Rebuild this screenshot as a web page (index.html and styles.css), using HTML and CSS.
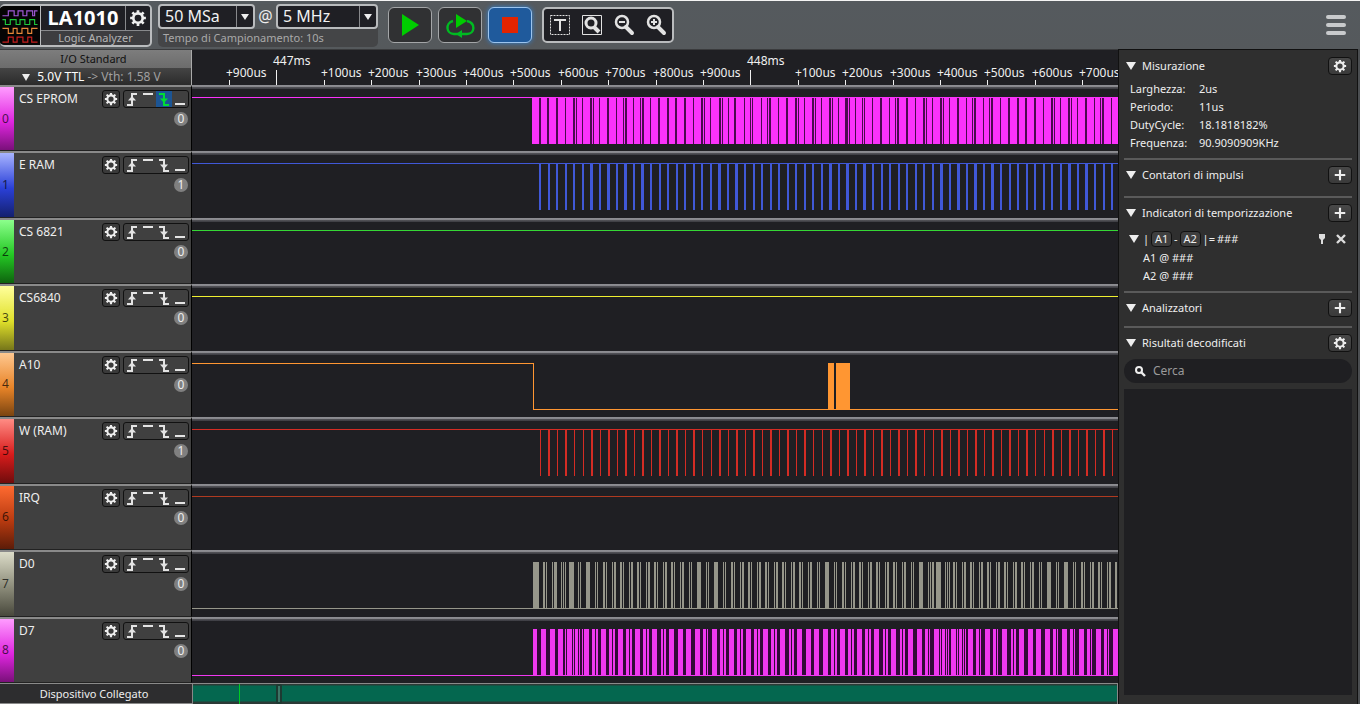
FILE: index.html
```html
<!DOCTYPE html>
<html lang="it">
<head>
    <meta charset="UTF-8">
    <meta name="viewport" content="width=device-width, initial-scale=1.0">
    <title>LA1010 Logic Analyzer</title>
    <link rel="stylesheet" href="styles.css">
</head>
<body>
    <svg class="symbols" aria-hidden="true">
        <symbol id="gear" viewBox="0 0 16 16">
            <circle cx="8" cy="8" r="4.2" fill="none" stroke="currentColor" stroke-width="2.4"/>
            <path d="M8 1v3M8 12v3M1 8h3M12 8h3M3 3l2.2 2.2M10.8 10.8L13 13M13 3l-2.2 2.2M5.2 10.8L3 13" stroke="currentColor" stroke-width="2.4"/>
        </symbol>
        <symbol id="plus" viewBox="0 0 16 16">
            <path d="M8 2v12M2 8h12" stroke="currentColor" stroke-width="2.4"/>
        </symbol>
        <symbol id="rising" viewBox="0 0 16 16">
            <path d="M3 14h5V3h5" fill="none" stroke="currentColor" stroke-width="2"/>
            <path d="M4 9.500L8 5l4 4.500z" fill="currentColor"/>
        </symbol>
        <symbol id="high" viewBox="0 0 16 16">
            <path d="M3 3h10" stroke="currentColor" stroke-width="2"/>
        </symbol>
        <symbol id="falling" viewBox="0 0 16 16">
            <path d="M3 3h5v11h5" fill="none" stroke="currentColor" stroke-width="2"/>
            <path d="M4 7.500L8 12l4-4.500z" fill="currentColor"/>
        </symbol>
        <symbol id="low" viewBox="0 0 16 16">
            <path d="M3 13h10" stroke="currentColor" stroke-width="2"/>
        </symbol>
    </svg>

    <header class="toolbar">
        <div class="device">
            <svg class="logo" viewBox="0 0 40 40" fill="none" stroke-width="1.2">
                <path stroke="#a05ad8" d="M2 10h6V5h6v5h4V5h5v5h4V5h6v5h2V5h3"/>
                <path stroke="#1fc83c" d="M2 14h3v5h5v-5h6v5h4v-5h5v5h5v-5h5v5h3"/>
                <path stroke="#e8883a" d="M2 23h6v5h5v-5h4v5h5v-5h6v5h4v-5h6"/>
                <path stroke="#c81e1e" d="M2 37h6v-5h5v5h4v-5h6v5h5v-5h4v5h6"/>
            </svg>
            <div class="device-info">
                <div class="device-top">
                    <strong>LA1010</strong>
                    <button class="device-gear" aria-label="Impostazioni dispositivo"><svg><use href="#gear"/></svg></button>
                </div>
                <div class="device-sub">Logic Analyzer</div>
            </div>
        </div>

        <div class="sampling">
            <div class="sampling-row">
                <span class="combo">
                    <select aria-label="Campioni"><option>50 MSa</option></select>
                </span>
                <span class="at">@</span>
                <span class="combo combo-wide">
                    <select aria-label="Frequenza"><option>5 MHz</option></select>
                </span>
            </div>
            <div class="sampling-time">Tempo di Campionamento: 10s</div>
        </div>

        <div class="run">
            <button aria-label="Avvia">
                <svg viewBox="0 0 32 32"><path d="M8 5v22l17-11z" fill="#0c0"/></svg>
            </button>
            <button aria-label="Ripeti">
                <svg viewBox="0 0 32 32">
                    <path d="M12 5v14l11-7z" fill="#0c0"/>
                    <path d="M9 12c-8 2-7 13 1 13h5M23 12c9 2 8 13 0 13h-6" fill="none" stroke="#0b2" stroke-width="2.4"/>
                    <path d="M12 25l6-4v8z" fill="#0b2"/>
                </svg>
            </button>
            <button class="stop" aria-label="Ferma">
                <svg viewBox="0 0 32 32"><path d="M8 8h16v16H8z" fill="#e22400"/></svg>
            </button>
        </div>

        <div class="tools">
            <button aria-label="Testo">
                <svg viewBox="0 0 24 24" fill="none" stroke="#e2e2e2">
                    <path d="M2.500 2.500h19v19h-19z" stroke-dasharray="2 1"/>
                    <path d="M6 7h12M12 7v11" stroke-width="2"/>
                </svg>
            </button>
            <button aria-label="Adatta zoom">
                <svg viewBox="0 0 24 24" fill="none" stroke="#e2e2e2">
                    <path d="M2.500 2.500h19v19h-19z"/>
                    <circle cx="11" cy="10" r="5" stroke-width="3"/>
                    <path d="M14 14l5 5" stroke-width="4"/>
                </svg>
            </button>
            <button aria-label="Riduci">
                <svg viewBox="0 0 24 24" fill="none" stroke="#e2e2e2">
                    <circle cx="10" cy="9" r="6" stroke-width="2.500"/>
                    <path d="M7 9h6" stroke-width="2"/>
                    <path d="M14 14l6 6" stroke-width="4" stroke-linecap="round"/>
                </svg>
            </button>
            <button aria-label="Ingrandisci">
                <svg viewBox="0 0 24 24" fill="none" stroke="#e2e2e2">
                    <circle cx="10" cy="9" r="6" stroke-width="2.500"/>
                    <path d="M7 9h6M10 6v6" stroke-width="2"/>
                    <path d="M14 14l6 6" stroke-width="4" stroke-linecap="round"/>
                </svg>
            </button>
        </div>

        <button class="menu" aria-label="Menu"><span></span><span></span><span></span></button>
    </header>

    <div class="workspace">
        <main class="analyzer">
            <div class="ruler-row">
                <div class="standard">
                    <div class="standard-title">I/O Standard</div>
                    <button class="standard-value"><i class="arrow small"></i><b>5.0V TTL</b> -&gt; Vth: 1.58 V</button>
                </div>
                <svg class="ruler"></svg>
            </div>
            <div class="channels"></div>
            <footer class="status">
                <div class="status-text">Dispositivo Collegato</div>
                <div class="overview">
                    <div class="overview-trigger"></div>
                    <div class="overview-view"></div>
                </div>
            </footer>
        </main>

        <aside class="panel">
            <section>
                <div class="section-head">
                    <h2><i class="arrow"></i>Misurazione</h2>
                    <button class="head-btn" aria-label="Impostazioni misurazione"><svg><use href="#gear"/></svg></button>
                </div>
                <table class="measures">
                    <tr><th>Larghezza:</th><td>2us</td></tr>
                    <tr><th>Periodo:</th><td>11us</td></tr>
                    <tr><th>DutyCycle:</th><td>18.1818182%</td></tr>
                    <tr><th>Frequenza:</th><td>90.9090909KHz</td></tr>
                </table>
            </section>
            <section class="closed">
                <div class="section-head">
                    <h2><i class="arrow"></i>Contatori di impulsi</h2>
                    <button class="head-btn" aria-label="Aggiungi contatore"><svg><use href="#plus"/></svg></button>
                </div>
            </section>
            <section>
                <div class="section-head">
                    <h2><i class="arrow"></i>Indicatori di temporizzazione</h2>
                    <button class="head-btn" aria-label="Aggiungi indicatore"><svg><use href="#plus"/></svg></button>
                </div>
                <div class="marker">
                    <i class="arrow"></i>
                    <span class="bar">|</span><button class="tag">A1</button>-<button class="tag">A2</button><span>|=</span>
                    <span>###</span>
                    <button class="icon-btn push" aria-label="Fissa">
                        <svg viewBox="0 0 12 12"><path d="M3 1h6v4L7 7v4H5V7L3 5z" fill="#ddd"/></svg>
                    </button>
                    <button class="icon-btn" aria-label="Rimuovi">
                        <svg viewBox="0 0 12 12"><path d="M2 2l8 8M10 2l-8 8" stroke="#ddd" stroke-width="2.400"/></svg>
                    </button>
                </div>
                <div class="marker-line">A1 @ ###</div>
                <div class="marker-line">A2 @ ###</div>
            </section>
            <section>
                <div class="section-head">
                    <h2><i class="arrow"></i>Analizzatori</h2>
                    <button class="head-btn" aria-label="Aggiungi analizzatore"><svg><use href="#plus"/></svg></button>
                </div>
            </section>
            <section class="results">
                <div class="section-head">
                    <h2><i class="arrow"></i>Risultati decodificati</h2>
                    <button class="head-btn" aria-label="Impostazioni risultati"><svg><use href="#gear"/></svg></button>
                </div>
                <label class="search">
                    <svg viewBox="0 0 12 12" fill="none" stroke="#eee"><circle cx="5" cy="5" r="3" stroke-width="2"/><path d="M7 7l4 4" stroke-width="2.400"/></svg>
                    <input type="text" placeholder="Cerca" aria-label="Cerca">
                </label>
                <div class="results-list"></div>
            </section>
        </aside>
    </div>
    <script src="script.js"></script>
</body>
</html>
```
FILE: styles.css
```css
* {
    box-sizing: border-box;
}
body {
    margin: 0;
    height: 100vh;
    display: flex;
    flex-direction: column;
    overflow: hidden;
    background-color: #4b4e51;
    color: #eee;
    font-family: "Noto Sans", "Open Sans", sans-serif;
    font-size: 12px;
    line-height: 18px;
}
button, select, input {
    margin: 0;
    padding: 0;
    border: 0;
    background: none;
    color: inherit;
    font: inherit;
}
button {
    cursor: pointer;
}
svg {
    display: block;
}
.symbols {
    position: absolute;
    width: 0;
    height: 0;
}

/* toolbar */
.toolbar {
    display: flex;
    align-items: center;
    height: 49px;
    flex: none;
    border-top: 1px solid #f4f4f4;
    background: linear-gradient(#555a5e, #55595c);
}
.device {
    display: flex;
    width: 152px;
    height: 43px;
    border: 2px solid #b9bbbd;
    border-left-width: 0;
    border-radius: 5px;
    background-color: #3d3d40;
    overflow: hidden;
}
.logo {
    width: 40px;
    height: 39px;
    background-color: #050505;
}
.device-info {
    flex: 1;
    border-left: 1px solid #b9bbbd;
}
.device-top {
    display: flex;
    height: 25px;
    background-color: #1f1f24;
    border-bottom: 1px solid #88898c;
}
.device-top strong {
    flex: 1;
    text-align: center;
    font-size: 20px;
    line-height: 24px;
    color: #fff;
}
.device-gear {
    width: 25px;
    border-left: 1px solid #88898c;
}
.device-gear svg {
    width: 18px;
    height: 18px;
    margin: auto;
}
.device-sub {
    text-align: center;
    font-size: 11px;
    line-height: 14px;
    color: #b4b4b4;
}
.sampling {
    width: 220px;
    height: 43px;
    margin-left: 6px;
    border-radius: 5px;
    background-color: #444547;
}
.sampling-row {
    display: flex;
    height: 25px;
    border-radius: 5px;
    background-color: #55595c;
}
.combo {
    position: relative;
    width: 97px;
    border: 2px solid #b9bbbd;
    border-radius: 4px;
    background-color: #1f1f24;
}
.combo-wide {
    width: 102px;
}
.combo select {
    appearance: none;
    width: 100%;
    height: 21px;
    padding-left: 5px;
    font-size: 16px;
    line-height: 20px;
    color: #f2f2f2;
}
.combo::before {
    content: "";
    position: absolute;
    top: 0;
    bottom: 0;
    right: 16px;
    border-left: 1px solid #88898c;
    pointer-events: none;
}
.combo::after {
    content: "";
    position: absolute;
    top: 8px;
    right: 4px;
    border: 4px solid transparent;
    border-top: 6px solid #eee;
    border-bottom: 0;
    pointer-events: none;
}
.at {
    flex: 1;
    text-align: center;
    font-size: 16px;
    line-height: 24px;
}
.sampling-time {
    padding-left: 5px;
    font-size: 11px;
    line-height: 17px;
    color: #a9a9a9;
}
.run {
    display: flex;
    gap: 6px;
    margin-left: 10px;
}
.run button {
    display: flex;
    align-items: center;
    justify-content: center;
    width: 44px;
    height: 36px;
    border: 1px solid #a4a6a8;
    border-radius: 6px;
    background-color: #303133;
}
.run svg {
    width: 32px;
    height: 32px;
}
.run .stop {
    background-color: #1f5a9c;
    border-color: #9cc4ee;
    box-shadow: 0 0 5px #2f7fd0;
}
.tools {
    display: flex;
    margin-left: 10px;
    height: 36px;
    border: 2px solid #b9bbbd;
    border-radius: 5px;
    background-color: #1f1f24;
}
.tools button {
    width: 32px;
}
.tools svg {
    width: 24px;
    height: 24px;
    margin: auto;
}
.menu {
    display: flex;
    flex-direction: column;
    gap: 4px;
    width: 20px;
    margin-left: auto;
    margin-right: 14px;
}
.menu span {
    height: 4px;
    border-radius: 2px;
    background-color: #c8cacc;
}

/* traces */
.workspace {
    flex: 1;
    display: flex;
    min-height: 0;
}
.analyzer {
    flex: 1;
    min-width: 0;
    display: flex;
    flex-direction: column;
    background-color: #1f1f23;
}
.ruler-row, .channel, .status {
    display: grid;
    grid-template-columns: 192px minmax(0, 1fr);
}
.ruler-row {
    height: 36px;
    flex: none;
    border-top: 1px solid #3a3b3d;
}
.standard {
    border-right: 1px solid #aaa;
}
.standard-title {
    height: 18px;
    text-align: center;
    font-size: 11px;
    padding-right: 4px;
    color: #111;
    background: linear-gradient(#7d7d7d, #6c6c6c);
}
.standard-value {
    display: block;
    width: 100%;
    height: 17px;
    line-height: 16px;
    text-align: center;
    color: #a0a0a0;
    background: linear-gradient(#444, #2b2b2b);
    padding-right: 8px;
}
.standard-value b {
    font-weight: normal;
    color: #fff;
}
.arrow {
    display: inline-block;
    flex: none;
    width: 0;
    height: 0;
    border: 5px solid transparent;
    border-top: 8px solid #eee;
    border-bottom: 0;
}
.arrow.small {
    border-width: 7px 4px 0;
    margin-right: 7px;
}
.ruler {
    width: 100%;
    height: 35px;
}
.ruler text {
    fill: #f0f0f0;
}
.ruler rect {
    fill: #f0f0f0;
}
.channels {
    flex: 1;
    display: flex;
    flex-direction: column;
}
.channel {
    flex: 1;
}
.channel-head {
    display: flex;
    border-top: 2px solid #8a8a8a;
    border-right: 1px solid #000;
    border-bottom: 1px solid #222;
    background-color: #404040;
}
.strip {
    display: flex;
    align-items: center;
    width: 14px;
    padding-left: 2px;
    color: rgba(0, 0, 0, 0.7);
}
.channel-body {
    flex: 1;
    display: grid;
    grid-template-columns: 1fr 18px 66px;
    column-gap: 3px;
    align-content: start;
    padding: 3px 2px 0 5px;
}
.gear-btn {
    width: 18px;
    height: 18px;
    border: 1px solid #111;
    border-radius: 3px;
    background-color: #3a3a3a;
}
.gear-btn svg {
    width: 14px;
    height: 14px;
    margin: auto;
}
.triggers {
    display: flex;
    height: 18px;
    border: 1px solid #111;
    border-radius: 3px;
}
.triggers button {
    width: 16px;
    height: 16px;
    color: #e4e4e4;
}
.triggers .active {
    background-color: #1c5594;
    color: #0d3;
}
.triggers svg {
    width: 16px;
    height: 16px;
}
.level {
    grid-column: 3;
    justify-self: end;
    width: 14px;
    height: 14px;
    margin: 4px 1px 0 0;
    border-radius: 7px;
    text-align: center;
    line-height: 14px;
    background-color: #808080;
}
.wave-box {
    background: linear-gradient(#8f8f94 0, #85858a 2px, #55555a 2px, #3a3a40 4px, #1f1f23 4px);
}
.wave {
    width: 100%;
    height: 64px;
    shape-rendering: crispEdges;
}
.status {
    height: 21px;
    flex: none;
    border-top: 1px solid #8a8a8a;
    border-bottom: 1px solid #8a8a8a;
    background-color: #2d2d2f;
}
.status-text {
    text-align: center;
    font-size: 11px;
    line-height: 20px;
    padding-right: 4px;
}
.overview {
    position: relative;
    border: 1px solid #888;
    border-width: 0 1px 0 1px;
    background: linear-gradient(#2b3a36 1px, #04674f 2px, #04674f 17px, #2b3a36 18px);
}
.overview-trigger {
    position: absolute;
    left: 5%;
    top: 0;
    bottom: 0;
    border-left: 1px solid #0c2;
}
.overview-view {
    position: absolute;
    left: 9%;
    top: 0;
    bottom: 0;
    width: 6px;
    border: 2px solid #1d3a32;
    border-radius: 2px;
    background-color: #3d7566;
}

/* right panel */
.panel {
    display: flex;
    flex-direction: column;
    width: 240px;
    margin-right: 2px;
    padding: 4px 5px 9px 5px;
    border: 1px solid #111;
    border-bottom: 0;
    background-color: #2f2f2f;
    font-size: 11px;
}
.panel section {
    padding-bottom: 6px;
    margin-bottom: 3px;
    border-bottom: 2px solid #5a5a5a;
}
.panel .closed {
    padding-bottom: 9px;
}
.section-head {
    display: flex;
    align-items: center;
    justify-content: space-between;
    height: 24px;
    padding-left: 2px;
}
.section-head h2 {
    display: flex;
    align-items: center;
    gap: 6px;
    margin: 0;
    font-size: 11px;
    font-weight: normal;
}
.head-btn {
    width: 24px;
    height: 18px;
    border: 1px solid #111;
    border-radius: 4px;
    background: linear-gradient(#484848, #3a3a3a);
}
.head-btn svg {
    width: 14px;
    height: 14px;
    margin: auto;
}
.measures {
    margin: 2px 0 0 6px;
    border-spacing: 0;
}
.measures th, .measures td {
    padding: 0;
    text-align: left;
    font-weight: normal;
}
.measures th {
    width: 69px;
}
.marker {
    display: flex;
    align-items: center;
    gap: 2px;
    height: 20px;
    margin-top: 4px;
    padding-left: 5px;
}
.bar {
    margin-left: 2px;
}
.tag {
    width: 21px;
    height: 16px;
    border: 1px solid #111;
    border-radius: 4px;
    line-height: 14px;
    background-color: #3f3f3f;
}
.icon-btn {
    width: 12px;
    height: 12px;
    margin-right: 5px;
}
.push {
    margin-left: auto;
}
.marker-line {
    padding-left: 19px;
}
.panel .results {
    flex: 1;
    display: flex;
    flex-direction: column;
    margin: 0;
    padding: 0;
    border: 0;
}
.search {
    display: flex;
    align-items: center;
    gap: 7px;
    height: 24px;
    margin: 4px 0 6px;
    padding: 0 10px;
    border-radius: 12px;
    background-color: #1f1f22;
    font-size: 12px;
}
.search svg {
    width: 12px;
    height: 12px;
}
.search input {
    flex: 1;
    min-width: 0;
    outline: none;
}
.search input::placeholder {
    color: #9a9a9a;
}
.results-list {
    flex: 1;
    background-color: #1f1f22;
}
```
FILE: script.js
```javascript
const HIGH = 12;
const LOW = 59;

// pulses are "x:width" in pixels from the left of the trace, width defaults to the channel's own
const channels = [
    {
        name: "CS EPROM", color: "#fb32fb", dark: "#4c0a50", top: "#ff9cff", mid: "#e026e0", bottom: "#7a107a",
        level: 0, idle: 1, active: "falling", start: 340, fill: true, width: 1,
        pulses: "347:2 355:2 364:2 373 381:2 384 390 398:2 401 407 415:2 424 431 433:2 441 448 450:2 458 466:2 475:2 483:2 492:2 501 509:2 512 518 527:2 530 536 542:2 552 558 560 569 575 577:2 586 594:2 603:2 606 612 620:2 623 629 637:2 640 646 653:3 657 663 670 672 680 688:2 697 703 705:2 714:2 723 731:2 734 740 748:2 751 757 765:2 774 780 782:2 791 797 799:2 808 816:2 825:2 833:2 842:2 851 859:2 862 868 876:2 879 885 893:2 902 908 910:2 919"
    },
    {
        name: "E RAM", color: "#4058d8", top: "#a8b4ff", mid: "#2a40d8", bottom: "#14206e",
        level: 1, idle: 1, width: 2,
        pulses: "347 356 364 373 381 390 398:3 407 415:3 424 432:3 441 449:3 458 467 475 484 492 501 509 518 526:3 535 543:3 552 561 569 578 586 595 603 612 620 629 637:3 646 654:3 663 671:3 680 689 697 706 714 723 731 740 748:3 757 765:3 774 782:3 791 799:3 808 817 825 834 842 851 859 868 876:3 885 893:3 902 911 919"
    },
    { name: "CS 6821", color: "#35d635", top: "#8cff8c", mid: "#24c824", bottom: "#0e640e", level: 0, idle: 1 },
    { name: "CS6840", color: "#f0f030", top: "#ffff9c", mid: "#e0e02a", bottom: "#76761a", level: 0, idle: 1 },
    {
        name: "A10", color: "#ff9632", top: "#ffc890", mid: "#e88428", bottom: "#7a4410",
        level: 0, idle: 1, drop: 341, width: 1, pulses: "636:6 644:14"
    },
    {
        name: "W (RAM)", color: "#d42c24", top: "#ff8c84", mid: "#d81c1c", bottom: "#700c0c",
        level: 1, idle: 1, width: 1,
        pulses: "348 356:2 365 373:2 382 391 399:2 408 416:2 425 433:2 442 450:2 459 467:2 476 484:2 493 501:2 510 519 527:2 536 544:2 553 561:2 570 578:2 587 595:2 604 612:2 621 630 638:2 647 655:2 664 672:2 681 689:2 698 706:2 715 723:2 732 741 749:2 758 766:2 775 783:2 792 800:2 809 817:2 826 834:2 843 852 860:2 869 877:2 886 894:2 903 911:2 920"
    },
    { name: "IRQ", color: "#b03a20", top: "#ff6a30", mid: "#b83a10", bottom: "#5c1c08", level: 0, idle: 1 },
    {
        name: "D0", color: "#96968a", top: "#dcdcc8", mid: "#8c8c7a", bottom: "#48483c",
        level: 0, idle: 0, width: 1,
        pulses: "341:6 351:2 354 360 362:3 369 371 373 377:5 386 388 394:4 403 405 411:2 414 420 422:2 428:2 431 437 439:2 445:2 448 454 456:2 462:2 465 471 473:2 479:2 482 488 490:2 497 499 505:4 514 516 522:4 531 533 539:2 542 548 550:2 556:2 559 565 567:2 573:2 576 582 584:2 590:2 593 599 601:2 607:2 610 616 618:2 625 627 633:4 642 644 650:2 653 659 661:2 667:2 670 676 678:2 684:2 687 693 695:2 701:2 704 710 712:2 719 721 727:4 736 738 740:2 744:5 753 755 757 761:2 764 770 772:2 778:2 781 787 789:2 795:2 798 804 806:2 812:2 815 821 823:2 829:2 832 838 840:2 847 849 855:4 864 866 872:4 881 883 889:2 892 898 900:2 906:2 909 915 917:2 923:2"
    },
    {
        name: "D7", color: "#f038f0", dark: "#330a38", top: "#ff9cff", mid: "#e026e0", bottom: "#7a107a",
        level: 0, idle: 0, start: 341, width: 5,
        pulses: "341:4 349 358 366 373:1 375 381:1 383:3 387:1 390:1 392 400:3 404:2 409 417:3 421:2 426 434:3 438:2 443 451:3 455:2 460 469:2 472:2 477 486 494 503 511:3 515:1 520 528:3 532:2 537 545:3 549:2 554 562:3 566:2 571 579:3 583:2 588 597:2 600:2 605 614 622 631 639:3 643:2 648 656:3 660:2 665 673:3 677:2 682 691:2 694:2 699 708:2 711:2 716 725 733:3 737:1 742 748:1 750:3 754:1 756:1 759 765:1 767:3 771:1 773:1 776 784:3 788:1 793 801:3 805:1 810 819:2 822:2 827 836 844 853 861:3 865:1 870 878:3 882:1 887 895:3 899:1 904 912:3 916:1 921"
    }
];

function rect(x, y, w, h, color) {
    return `<rect x="${x}" y="${y}" width="${w}" height="${h}" fill="${color}"/>`;
}

function drawWave(ch) {
    const height = LOW - HIGH;
    let out = "";
    if (ch.dark) {
        out += rect(ch.start, HIGH, 926 - ch.start, height, ch.fill ? ch.color : ch.dark);
    }
    (ch.pulses || "").split(" ").filter(Boolean).forEach(function(pulse) {
        const [x, w] = pulse.split(":");
        out += rect(x, HIGH, w || ch.width, height, ch.fill ? ch.dark : ch.color);
    });
    if (ch.drop) {
        out += rect(0, HIGH, ch.drop, 1, ch.color);
        out += rect(ch.drop, HIGH, 1, height, ch.color);
        out += rect(ch.drop, LOW - 1, "100%", 1, ch.color);
    } else {
        out += rect(0, ch.idle ? HIGH : LOW - 1, "100%", 1, ch.color);
    }
    return out;
}

function channelRow(ch, index) {
    const triggers = ["rising", "high", "falling", "low"].map(function(type) {
        return `<button class="${type === ch.active ? "active" : ""}" aria-label="${type}"><svg><use href="#${type}"/></svg></button>`;
    }).join("");
    return `
        <div class="channel">
            <div class="channel-head">
                <div class="strip" style="background: linear-gradient(${ch.top}, ${ch.mid} 55%, ${ch.bottom})">${index}</div>
                <div class="channel-body">
                    <span>${ch.name}</span>
                    <button class="gear-btn" aria-label="Impostazioni ${ch.name}"><svg><use href="#gear"/></svg></button>
                    <div class="triggers">${triggers}</div>
                    <span class="level">${ch.level}</span>
                </div>
            </div>
            <div class="wave-box"><svg class="wave">${drawWave(ch)}</svg></div>
        </div>`;
}

const ruler = document.querySelector(".ruler");

function drawRuler() {
    const first = 84.4;
    const step = 47.4;
    const width = ruler.getBoundingClientRect().width;
    let out = "";
    for (let i = -1; first + i * step < width; i++) {
        const x = Math.round(first + i * step);
        const tenth = (i + 10) % 10;
        if (tenth === 0) {
            out += `<rect x="${x}" y="20" width="1" height="15"/><text x="${x - 3}" y="15">${447 + i / 10}ms</text>`;
        } else {
            out += `<rect x="${x}" y="30" width="1" height="5"/><text x="${x - 3}" y="27">+${tenth}00us</text>`;
        }
    }
    ruler.innerHTML = out;
}

document.querySelector(".channels").innerHTML = channels.map(channelRow).join("");
drawRuler();
window.addEventListener("resize", drawRuler);
```
